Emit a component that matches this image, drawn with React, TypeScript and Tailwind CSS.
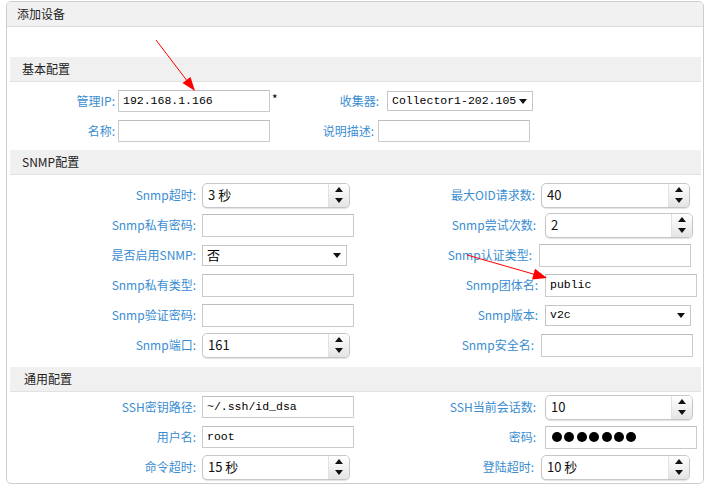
import React from "react";

const LABEL =
  "shrink-0 text-right whitespace-nowrap text-[12px] leading-none text-[#3a8dd1]";

function Up() {
  return (
    <svg width="8" height="5" viewBox="0 0 8 5">
      <polygon points="4,0 8,5 0,5" fill="#111" />
    </svg>
  );
}
function Down() {
  return (
    <svg width="8" height="5" viewBox="0 0 8 5">
      <polygon points="0,0 8,0 4,5" fill="#111" />
    </svg>
  );
}

function TextInput({ cls, value, mono = true }: { cls: string; value?: string; mono?: boolean }) {
  return (
    <div
      className={
        "shrink-0 flex items-center border border-[#cbcbcb] border-t-[#bdbdbd] bg-white pl-[4px] overflow-hidden " +
        cls +
        (mono
          ? " font-['Liberation_Mono',monospace] text-[11.5px] text-black"
          : " text-[13px] text-black")
      }
    >
      {value}
    </div>
  );
}

function Spinner({ cls, value }: { cls: string; value: string }) {
  return (
    <div
      className={
        "shrink-0 flex h-[25px] rounded-[5px] border border-[#c6c6c6] bg-white shadow-[0_1px_1px_rgba(0,0,0,0.12)] overflow-hidden " +
        cls
      }
    >
      <div className="flex-1 flex items-center pl-[5px] text-[13px] text-[#111]">{value}</div>
      <div className="w-[21px] flex flex-col items-center justify-center gap-[6px] border-l border-[#e2e2e2] bg-linear-to-b from-white to-[#e4e4e4]">
        <Up />
        <Down />
      </div>
    </div>
  );
}

function Select({ cls, value, mono = true }: { cls: string; value: string; mono?: boolean }) {
  return (
    <div
      className={
        "shrink-0 flex items-center border border-[#c6c6c6] bg-white pl-[4px] pr-[5px] " + cls
      }
    >
      <div
        className={
          "flex-1 whitespace-nowrap " +
          (mono
            ? "font-['Liberation_Mono',monospace] text-[11.5px] text-black"
            : "text-[13px] text-black")
        }
      >
        {value}
      </div>
      <Down />
    </div>
  );
}

function SectionHeader({ title, pl }: { title: string; pl: string }) {
  return (
    <div
      className={
        "h-[25px] bg-[#f0f0f0] border-b border-[#e2e2e2] flex items-center text-[12px] text-[#222] " + pl
      }
    >
      {title}
    </div>
  );
}

export default function App() {
  return (
    <div className="relative w-[710px] h-[485px] bg-white pl-[6px] pt-[1px] font-['Noto_Sans_CJK_SC','Noto_Sans',sans-serif]">
      <div className="w-[698px] h-[483px] border border-[#cdcdcd] rounded-[5px] overflow-hidden">
        <div className="h-[25px] bg-[#f1f1f1] border-b border-[#dcdcdc] flex items-center pl-[10px] text-[12px] text-[#222]">
          添加设备
        </div>

        <div className="pl-[3px] pr-[2px] pt-[30px]">
          {/* 基本配置 */}
          <SectionHeader title="基本配置" pl="pl-[12px]" />
          <div className="pt-[4px] pb-[4px]">
            <div className="flex items-center h-[30px]">
              <div className="w-[290px] flex items-center">
                <div className={LABEL + " w-[105px]"}>管理IP:</div>
                <TextInput cls="ml-[3px] w-[152px] h-[22px]" value="192.168.1.166" />
                <span className="ml-[2px] text-[12px] leading-none text-black mb-[5px]">*</span>
              </div>
              <div className={LABEL + " w-[79px]"}>收集器:</div>
              <Select cls="ml-[8px] w-[146px] h-[20px]" value="Collector1-202.105" />
            </div>
            <div className="flex items-center h-[30px]">
              <div className="w-[290px] flex items-center">
                <div className={LABEL + " w-[105px]"}>名称:</div>
                <TextInput cls="ml-[3px] w-[152px] h-[22px]" />
              </div>
              <div className={LABEL + " w-[74px]"}>说明描述:</div>
              <TextInput cls="ml-[4px] w-[152px] h-[22px]" />
            </div>
          </div>

          {/* SNMP配置 */}
          <SectionHeader title="SNMP配置" pl="pl-[12px]" />
          <div className="pt-[5px] pb-[7px]">
            <div className="flex items-center h-[30px]">
              <div className="w-[350px] flex items-center">
                <div className={LABEL + " w-[186px]"}>Snmp超时:</div>
                <Spinner cls="ml-[6px] w-[148px]" value="3 秒" />
              </div>
              <div className={LABEL + " w-[175px]"}>最大OID请求数:</div>
              <Spinner cls="ml-[6px] w-[149px]" value="40" />
            </div>
            <div className="flex items-center h-[30px]">
              <div className="w-[350px] flex items-center">
                <div className={LABEL + " w-[186px]"}>Snmp私有密码:</div>
                <TextInput cls="ml-[6px] w-[152px] h-[23px]" />
              </div>
              <div className={LABEL + " w-[176px]"}>Snmp尝试次数:</div>
              <Spinner cls="ml-[9px] w-[148px]" value="2" />
            </div>
            <div className="flex items-center h-[30px]">
              <div className="w-[350px] flex items-center">
                <div className={LABEL + " w-[186px]"}>是否启用SNMP:</div>
                <Select cls="ml-[6px] w-[145px] h-[21px]" value="否" mono={false} />
              </div>
              <div className={LABEL + " w-[172px]"}>Snmp认证类型:</div>
              <TextInput cls="ml-[7px] w-[152px] h-[23px]" />
            </div>
            <div className="flex items-center h-[30px]">
              <div className="w-[350px] flex items-center">
                <div className={LABEL + " w-[186px]"}>Snmp私有类型:</div>
                <TextInput cls="ml-[6px] w-[152px] h-[23px]" />
              </div>
              <div className={LABEL + " w-[178px]"}>Snmp团体名:</div>
              <TextInput cls="ml-[7px] w-[152px] h-[23px]" value="public" />
            </div>
            <div className="flex items-center h-[30px]">
              <div className="w-[350px] flex items-center">
                <div className={LABEL + " w-[186px]"}>Snmp验证密码:</div>
                <TextInput cls="ml-[6px] w-[152px] h-[23px]" />
              </div>
              <div className={LABEL + " w-[178px]"}>Snmp版本:</div>
              <Select cls="ml-[7px] w-[146px] h-[21px]" value="v2c" />
            </div>
            <div className="flex items-center h-[30px]">
              <div className="w-[350px] flex items-center">
                <div className={LABEL + " w-[186px]"}>Snmp端口:</div>
                <Spinner cls="ml-[6px] w-[148px]" value="161" />
              </div>
              <div className={LABEL + " w-[174px]"}>Snmp安全名:</div>
              <TextInput cls="ml-[7px] w-[152px] h-[23px]" />
            </div>
          </div>

          {/* 通用配置 */}
          <SectionHeader title="通用配置" pl="pl-[14px]" />
          <div className="pt-[0px]">
            <div className="flex items-center h-[30px]">
              <div className="w-[350px] flex items-center">
                <div className={LABEL + " w-[186px]"}>SSH密钥路径:</div>
                <TextInput cls="ml-[6px] w-[152px] h-[22px]" value="~/.ssh/id_dsa" />
              </div>
              <div className={LABEL + " w-[176px]"}>SSH当前会话数:</div>
              <Spinner cls="ml-[9px] w-[148px]" value="10" />
            </div>
            <div className="flex items-center h-[30px]">
              <div className="w-[350px] flex items-center">
                <div className={LABEL + " w-[186px]"}>用户名:</div>
                <TextInput cls="ml-[6px] w-[152px] h-[22px]" value="root" />
              </div>
              <div className={LABEL + " w-[176px]"}>密码:</div>
              <div className="ml-[9px] w-[152px] h-[23px] shrink-0 flex items-center gap-[2.4px] pl-[6px] border border-[#cbcbcb] border-t-[#bdbdbd] bg-white">
                {[0, 1, 2, 3, 4, 5, 6].map((i) => (
                  <span key={i} className="w-[10px] h-[10px] rounded-full bg-black" />
                ))}
              </div>
            </div>
            <div className="flex items-center h-[30px]">
              <div className="w-[350px] flex items-center">
                <div className={LABEL + " w-[186px]"}>命令超时:</div>
                <Spinner cls="ml-[6px] w-[148px]" value="15 秒" />
              </div>
              <div className={LABEL + " w-[174px]"}>登陆超时:</div>
              <Spinner cls="ml-[7px] w-[149px]" value="10 秒" />
            </div>
          </div>
        </div>
      </div>

      <svg
        className="absolute left-0 top-0 pointer-events-none"
        width="710"
        height="485"
        viewBox="0 0 710 485"
      >
        <line x1="156" y1="40" x2="188" y2="82" stroke="#ff0000" strokeWidth="1" />
        <polygon points="195,91 182.5,82.9 190.5,76.9" fill="#ff0000" />
        <line x1="467" y1="255" x2="535" y2="274.5" stroke="#ff0000" strokeWidth="1" />
        <polygon points="547,278 532,279.4 535,268.8" fill="#ff0000" />
      </svg>
    </div>
  );
}
